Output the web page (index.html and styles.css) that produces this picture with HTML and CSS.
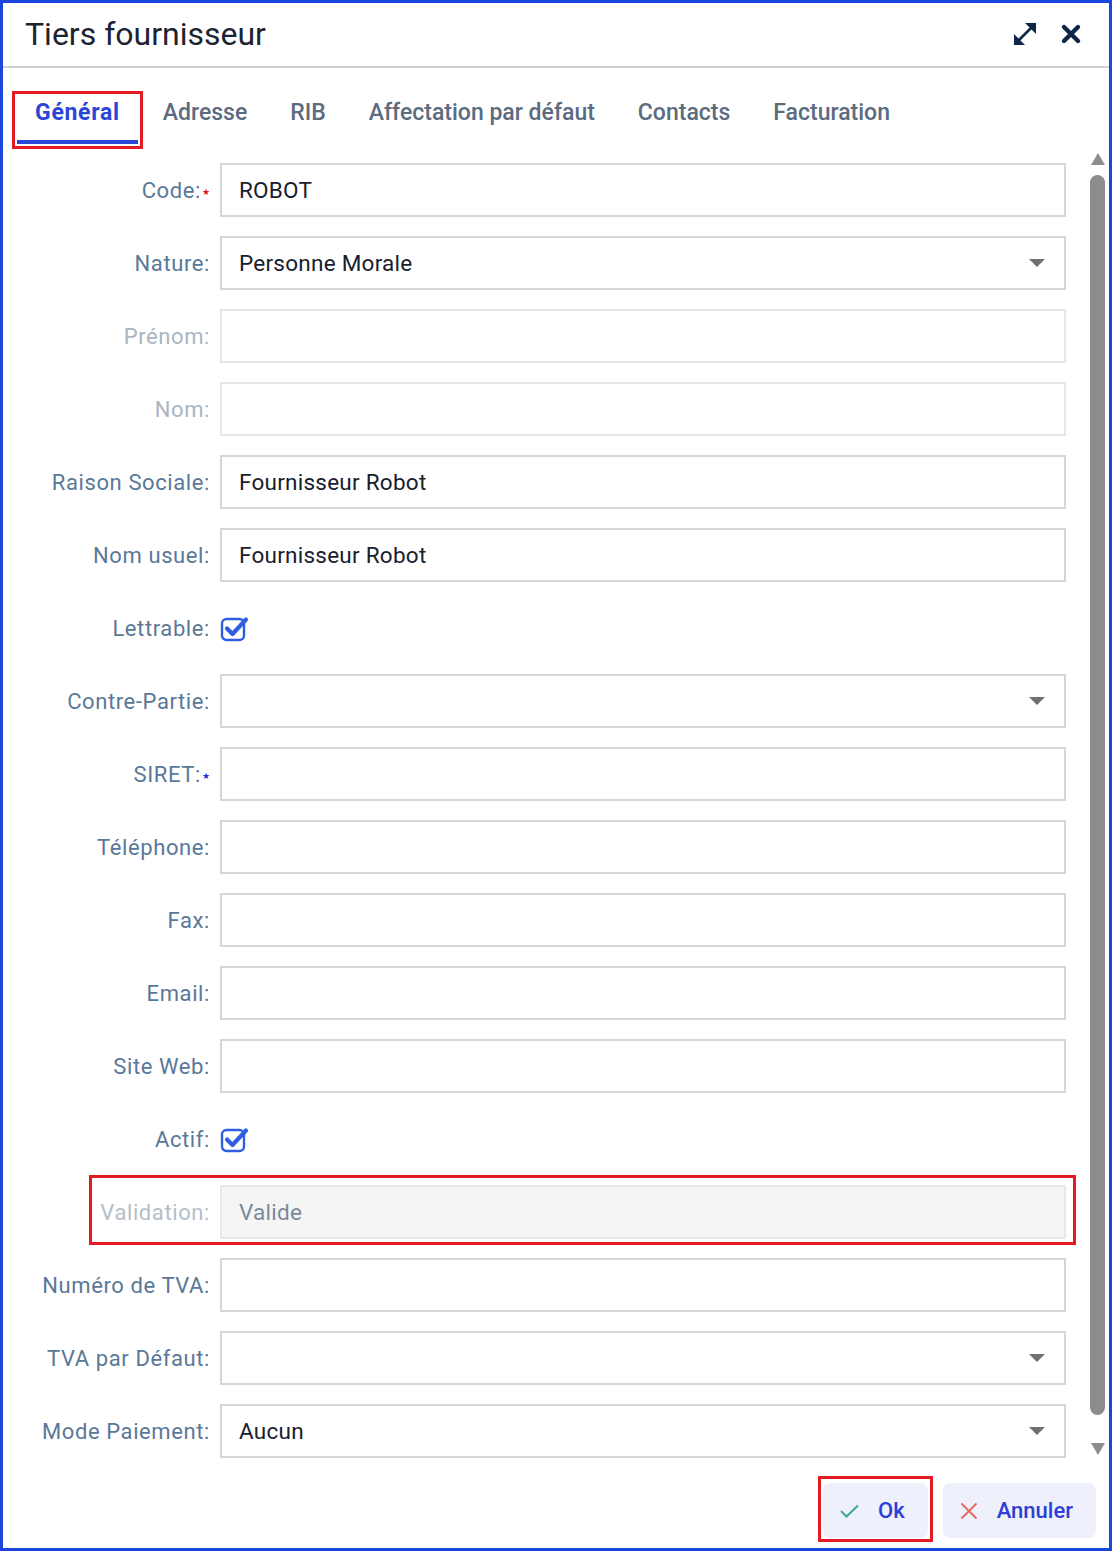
FILE: index.html
```html
<!DOCTYPE html>
<html lang="fr">
<head>
    <meta charset="UTF-8">
    <meta name="viewport" content="width=device-width, initial-scale=1.0">
    <title>Tiers fournisseur</title>
    <link rel="stylesheet" href="styles.css">
</head>
<body>
    <div class="dialog">
        <div class="dialog-header">
            <h1 class="dialog-title">Tiers fournisseur</h1>
            <div class="header-tools">
                <button class="tool-btn" title="Agrandir">
                    <svg width="26" height="26" viewBox="0 0 26 26">
                        <line x1="7" y1="19" x2="19" y2="7" stroke="#0d2847" stroke-width="2.6"/>
                        <polygon points="13,2 24,2 24,13" fill="#0d2847"/>
                        <polygon points="2,13 2,24 13,24" fill="#0d2847"/>
                    </svg>
                </button>
                <button class="tool-btn" title="Fermer">
                    <svg width="22" height="22" viewBox="0 0 22 22">
                        <path d="M4 4 L18 18 M18 4 L4 18" stroke="#0d2847" stroke-width="4.4" stroke-linecap="round"/>
                    </svg>
                </button>
            </div>
        </div>

        <div class="tabs">
            <div class="tab active">Général</div>
            <div class="tab">Adresse</div>
            <div class="tab">RIB</div>
            <div class="tab">Affectation par défaut</div>
            <div class="tab">Contacts</div>
            <div class="tab">Facturation</div>
        </div>

        <div class="dialog-body">
            <div class="form">
                <div class="row">
                    <label class="field-label">Code:<span class="req red">★</span></label>
                    <div class="field">ROBOT</div>
                </div>
                <div class="row">
                    <label class="field-label">Nature:</label>
                    <div class="field select">Personne Morale<span class="caret"></span></div>
                </div>
                <div class="row disabled">
                    <label class="field-label">Prénom:</label>
                    <div class="field"></div>
                </div>
                <div class="row disabled">
                    <label class="field-label">Nom:</label>
                    <div class="field"></div>
                </div>
                <div class="row">
                    <label class="field-label">Raison Sociale:</label>
                    <div class="field">Fournisseur Robot</div>
                </div>
                <div class="row">
                    <label class="field-label">Nom usuel:</label>
                    <div class="field">Fournisseur Robot</div>
                </div>
                <div class="row">
                    <label class="field-label">Lettrable:</label>
                    <div class="check">
                        <svg width="30" height="28" viewBox="0 0 30 28">
                            <rect x="2" y="5" width="22" height="21" rx="4.5" fill="none" stroke="#2f5fe0" stroke-width="2.4"/>
                            <path d="M7 14.5 L12.5 20 L26 5.5" fill="none" stroke="#2f5fe0" stroke-width="4.2" stroke-linecap="round" stroke-linejoin="round"/>
                        </svg>
                    </div>
                </div>
                <div class="row">
                    <label class="field-label">Contre-Partie:</label>
                    <div class="field select"><span class="caret"></span></div>
                </div>
                <div class="row">
                    <label class="field-label">SIRET:<span class="req blue">★</span></label>
                    <div class="field"></div>
                </div>
                <div class="row">
                    <label class="field-label">Téléphone:</label>
                    <div class="field"></div>
                </div>
                <div class="row">
                    <label class="field-label">Fax:</label>
                    <div class="field"></div>
                </div>
                <div class="row">
                    <label class="field-label">Email:</label>
                    <div class="field"></div>
                </div>
                <div class="row">
                    <label class="field-label">Site Web:</label>
                    <div class="field"></div>
                </div>
                <div class="row">
                    <label class="field-label">Actif:</label>
                    <div class="check">
                        <svg width="30" height="28" viewBox="0 0 30 28">
                            <rect x="2" y="5" width="22" height="21" rx="4.5" fill="none" stroke="#2f5fe0" stroke-width="2.4"/>
                            <path d="M7 14.5 L12.5 20 L26 5.5" fill="none" stroke="#2f5fe0" stroke-width="4.2" stroke-linecap="round" stroke-linejoin="round"/>
                        </svg>
                    </div>
                </div>
                <div class="row readonly flagged">
                    <label class="field-label">Validation:</label>
                    <div class="field">Valide</div>
                </div>
                <div class="row">
                    <label class="field-label">Numéro de TVA:</label>
                    <div class="field"></div>
                </div>
                <div class="row">
                    <label class="field-label">TVA par Défaut:</label>
                    <div class="field select"><span class="caret"></span></div>
                </div>
                <div class="row">
                    <label class="field-label">Mode Paiement:</label>
                    <div class="field select">Aucun<span class="caret"></span></div>
                </div>
            </div>

            <div class="scrollbar">
                <span class="scroll-up"></span>
                <span class="scroll-thumb"></span>
                <span class="scroll-down"></span>
            </div>
        </div>

        <div class="dialog-footer">
            <button class="btn flagged-btn">
                <svg width="19" height="14" viewBox="0 0 19 14">
                    <path d="M1 7 L6.5 12.5 L18 1.5" fill="none" stroke="#3aa99a" stroke-width="2"/>
                </svg>
                Ok
            </button>
            <button class="btn">
                <svg width="18" height="18" viewBox="0 0 18 18">
                    <path d="M1.5 1.5 L16.5 16.5 M16.5 1.5 L1.5 16.5" stroke="#e8675e" stroke-width="1.8"/>
                </svg>
                Annuler
            </button>
        </div>
    </div>
</body>
</html>
```

FILE: styles.css
```css
* {
    box-sizing: border-box;
}

body {
    margin: 0;
    font-family: Roboto, "Liberation Sans", sans-serif;
    background: #ffffff;
}

.dialog {
    width: 1112px;
    height: 1551px;
    border: 3px solid #1c45de;
    display: flex;
    flex-direction: column;
    background: #fff;
}

/* header */
.dialog-header {
    height: 65px;
    flex-shrink: 0;
    display: flex;
    align-items: center;
    padding: 0 27px 2px 22px;
    border-bottom: 2px solid #d2d2d2;
}

.dialog-title {
    margin: 0;
    font-size: 32px;
    font-weight: 400;
    color: #1b2330;
    flex: 1;
}

.header-tools {
    display: flex;
    align-items: center;
    gap: 22px;
}

.tool-btn {
    background: none;
    border: none;
    padding: 0;
    display: flex;
    cursor: pointer;
}

/* tabs */
.tabs {
    height: 82px;
    flex-shrink: 0;
    display: flex;
    gap: 7px;
    padding: 28px 0 0 14px;
}

.tab {
    height: 48px;
    padding: 2px 18px 12px;
    line-height: 30px;
    font-size: 23px;
    font-weight: 500;
    color: #5b6b80;
    border-bottom: 4px solid transparent;
    white-space: nowrap;
}

.tab.active {
    font-weight: 700;
    letter-spacing: 0.7px;
    color: #2b45d6;
    border-bottom-color: #2b45d6;
    outline: 3px solid #e31b23;
    outline-offset: 2px;
}

/* form body */
.dialog-body {
    flex: 1;
    display: flex;
    min-height: 0;
}

.form {
    width: 1063px;
    padding-top: 13px;
    display: flex;
    flex-direction: column;
    gap: 19px;
}

.row {
    position: relative;
    height: 54px;
    display: grid;
    grid-template-columns: 207px 846px;
    column-gap: 10px;
    align-items: center;
}

.field-label {
    text-align: right;
    font-size: 22px;
    letter-spacing: 0.6px;
    color: #5a7898;
    white-space: nowrap;
}

.req {
    font-family: "DejaVu Sans", sans-serif;
    font-size: 9px;
    vertical-align: 3px;
    margin-left: 1px;
    letter-spacing: 0;
}

.req.red { color: #e0141c; }
.req.blue { color: #1a2fd0; }

.field {
    height: 54px;
    border: 2px solid #d6d6d6;
    background: #fff;
    display: flex;
    align-items: center;
    padding: 0 19px 0 17px;
    font-size: 22.5px;
    letter-spacing: 0.25px;
    color: #18202e;
}

.caret {
    margin-left: auto;
    width: 0;
    height: 0;
    border-left: 8px solid transparent;
    border-right: 8px solid transparent;
    border-top: 8px solid #707070;
}

.check {
    display: flex;
    align-items: center;
}

.row.disabled .field-label {
    color: #a9b5c1;
}

.row.disabled .field {
    border-color: #e6e6e6;
}

.row.readonly .field-label {
    color: #b4bec8;
}

.row.readonly .field {
    background: #f5f5f5;
    border-color: #e8e8e8;
    color: #7a8a9a;
}

.row.flagged::after {
    content: "";
    position: absolute;
    left: 86px;
    right: -10px;
    top: -10px;
    bottom: -6px;
    border: 3px solid #e31b23;
    pointer-events: none;
}

/* scrollbar */
.scrollbar {
    width: 15px;
    margin-left: 24px;
    padding-top: 3px;
    display: flex;
    flex-direction: column;
    align-items: center;
}

.scroll-up,
.scroll-down {
    width: 0;
    height: 0;
    border-left: 7px solid transparent;
    border-right: 7px solid transparent;
}

.scroll-up {
    border-bottom: 12px solid #8c8c8c;
}

.scroll-down {
    border-top: 12px solid #8c8c8c;
}

.scroll-thumb {
    width: 15px;
    height: 1240px;
    margin: 10px 0 28px;
    border-radius: 8px;
    background: #8c8c8c;
}

/* footer */
.dialog-footer {
    height: 80px;
    flex-shrink: 0;
    display: flex;
    justify-content: flex-end;
    align-items: flex-start;
    gap: 15px;
    padding: 15px 13px 0 0;
}

.btn {
    position: relative;
    height: 55px;
    display: flex;
    align-items: center;
    gap: 19px;
    padding: 0 23px 0 17px;
    border: none;
    border-radius: 7px;
    background: #eef0fb;
    font-family: Roboto, "Liberation Sans", sans-serif;
    font-size: 22px;
    font-weight: 500;
    color: #2b3fd6;
    cursor: pointer;
}

.btn.flagged-btn::after {
    content: "";
    position: absolute;
    left: -5px;
    right: -5px;
    top: -7px;
    bottom: -4px;
    border: 3px solid #e31b23;
    pointer-events: none;
}
```
